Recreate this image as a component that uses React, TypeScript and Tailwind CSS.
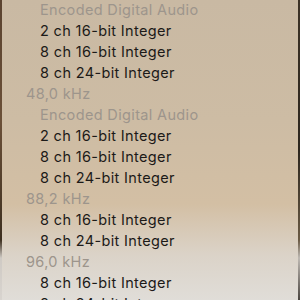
import React from "react";

type Row = { t: string; kind: "h1" | "h2" | "item" };

const rows: Row[] = [
  { t: "Encoded Digital Audio", kind: "h2" },
  { t: "2 ch 16-bit Integer", kind: "item" },
  { t: "8 ch 16-bit Integer", kind: "item" },
  { t: "8 ch 24-bit Integer", kind: "item" },
  { t: "48,0 kHz", kind: "h1" },
  { t: "Encoded Digital Audio", kind: "h2" },
  { t: "2 ch 16-bit Integer", kind: "item" },
  { t: "8 ch 16-bit Integer", kind: "item" },
  { t: "8 ch 24-bit Integer", kind: "item" },
  { t: "88,2 kHz", kind: "h1" },
  { t: "8 ch 16-bit Integer", kind: "item" },
  { t: "8 ch 24-bit Integer", kind: "item" },
  { t: "96,0 kHz", kind: "h1" },
  { t: "8 ch 16-bit Integer", kind: "item" },
  { t: "8 ch 24-bit Integer", kind: "item" },
];

export default function App() {
  return (
    <div className="w-[300px] h-[300px] overflow-hidden flex bg-[linear-gradient(180deg,#c9b9a3_0%,#cdbca4_40%,#d3bfa4_68%,#dbd3c8_85%,#e0ddd8_100%)]">
      <div className="w-[2px] h-full bg-[linear-gradient(180deg,#5a4330_0%,#6b5038_40%,#3e3020_80%,#cfcac4_86%,#d8d4cf_100%)]" />
      <div className="flex-1 flex flex-col -mt-[1px] font-['Inter','Liberation_Sans',sans-serif] text-[14.5px] tracking-[0.35px]">
        {rows.map((r, i) => (
          <div
            key={i}
            className={
              "h-[21px] flex items-center shrink-0 whitespace-nowrap " +
              (r.kind === "h1"
                ? "pl-[24px] text-[#9d958c]"
                : r.kind === "h2"
                ? "pl-[38px] text-[#9d958c]"
                : "pl-[38px] text-[#1c1a18]")
            }
          >
            {r.t}
          </div>
        ))}
      </div>
      <div className="w-[2px] h-full bg-[linear-gradient(180deg,#3c3226_0%,#2c261e_50%,#6a5a44_80%,#bdb8b2_86%,#4a4540_100%)]" />
    </div>
  );
}
